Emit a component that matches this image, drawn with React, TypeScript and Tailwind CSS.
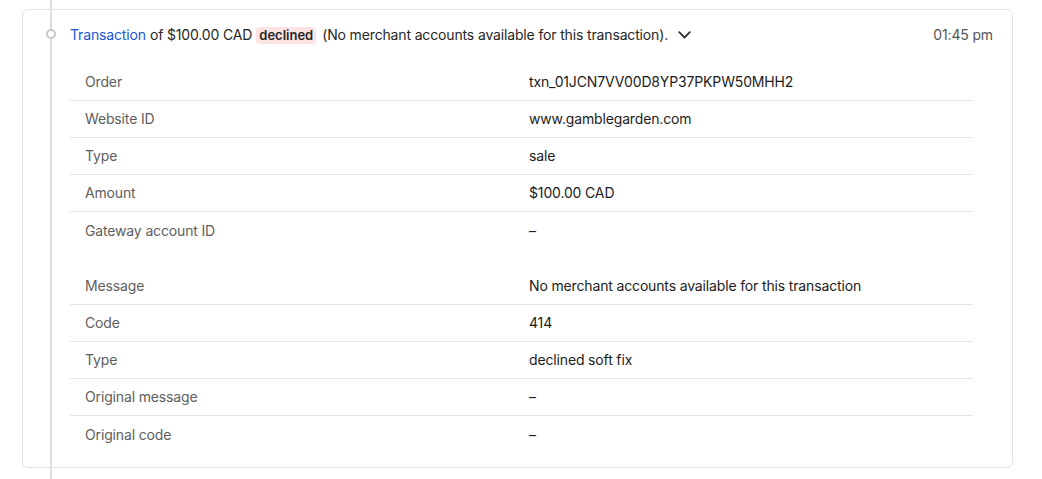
import React from "react";

const rows1: [string, string][] = [
  ["Order", "txn_01JCN7VV00D8YP37PKPW50MHH2"],
  ["Website ID", "www.gamblegarden.com"],
  ["Type", "sale"],
  ["Amount", "$100.00 CAD"],
  ["Gateway account ID", "–"],
];
const rows2: [string, string][] = [
  ["Message", "No merchant accounts available for this transaction"],
  ["Code", "414"],
  ["Type", "declined soft fix"],
  ["Original message", "–"],
  ["Original code", "–"],
];

function Table({ rows }: { rows: [string, string][] }) {
  return (
    <div className="flex flex-col">
      {rows.map(([k, v], i) => (
        <div
          key={k + i}
          className={
            "grid grid-cols-[459px_1fr] h-[37px] items-center " +
            (i < rows.length - 1 ? "border-b border-[#e6e6e6]" : "")
          }
        >
          <div className="pl-[15px] text-[#5e5e5e]">{k}</div>
          <div className="text-[#1c1c1c]">{v}</div>
        </div>
      ))}
    </div>
  );
}

export default function App() {
  return (
    <div
      className="relative w-[1042px] h-[479px] bg-white text-[14px] leading-[22px] tracking-[-0.15px]"
      style={{ fontFamily: "Inter, 'Noto Sans', sans-serif" }}
    >
      <div className="absolute left-[50px] top-0 w-[2px] h-[479px] bg-[#dcdcdc]" />
      <div className="pt-[9px] pl-[22px] w-[1013px]">
        <div className="relative border border-[#e2e2e2] rounded-[6px] pl-[47px] pr-[19px] pt-[14px] pb-[14px]">
          <div className="absolute left-[23px] top-[19px] w-[10px] h-[10px] rounded-full border-2 border-[#c8c8c8] bg-white" />
          <div className="flex items-center justify-between h-[22px]">
            <div className="flex items-center text-[#262626]">
              <span className="text-[#1a56db]">Transaction</span>
              <span className="ml-[4px]">of $100.00 CAD</span>
              <span className="ml-[4px] px-[3px] rounded-[4px] bg-[#fde3e3] text-[13px] font-semibold leading-[17px] text-[#262626] tracking-normal">
                declined
              </span>
              <span className="ml-[6px]">(No merchant accounts available for this transaction).</span>
              <svg
                className="ml-[10px]"
                width="13"
                height="8"
                viewBox="0 0 13 8"
                fill="none"
                stroke="#333"
                strokeWidth="1.8"
                strokeLinecap="round"
                strokeLinejoin="round"
              >
                <path d="M1.2 1.2l5.3 5.3 5.3-5.3" />
              </svg>
            </div>
            <div className="text-[#555]">01:45 pm</div>
          </div>
          <div className="mt-[18px] mr-[20px]">
            <Table rows={rows1} />
            <div className="h-[19px]" />
            <Table rows={rows2} />
          </div>
        </div>
      </div>
    </div>
  );
}
